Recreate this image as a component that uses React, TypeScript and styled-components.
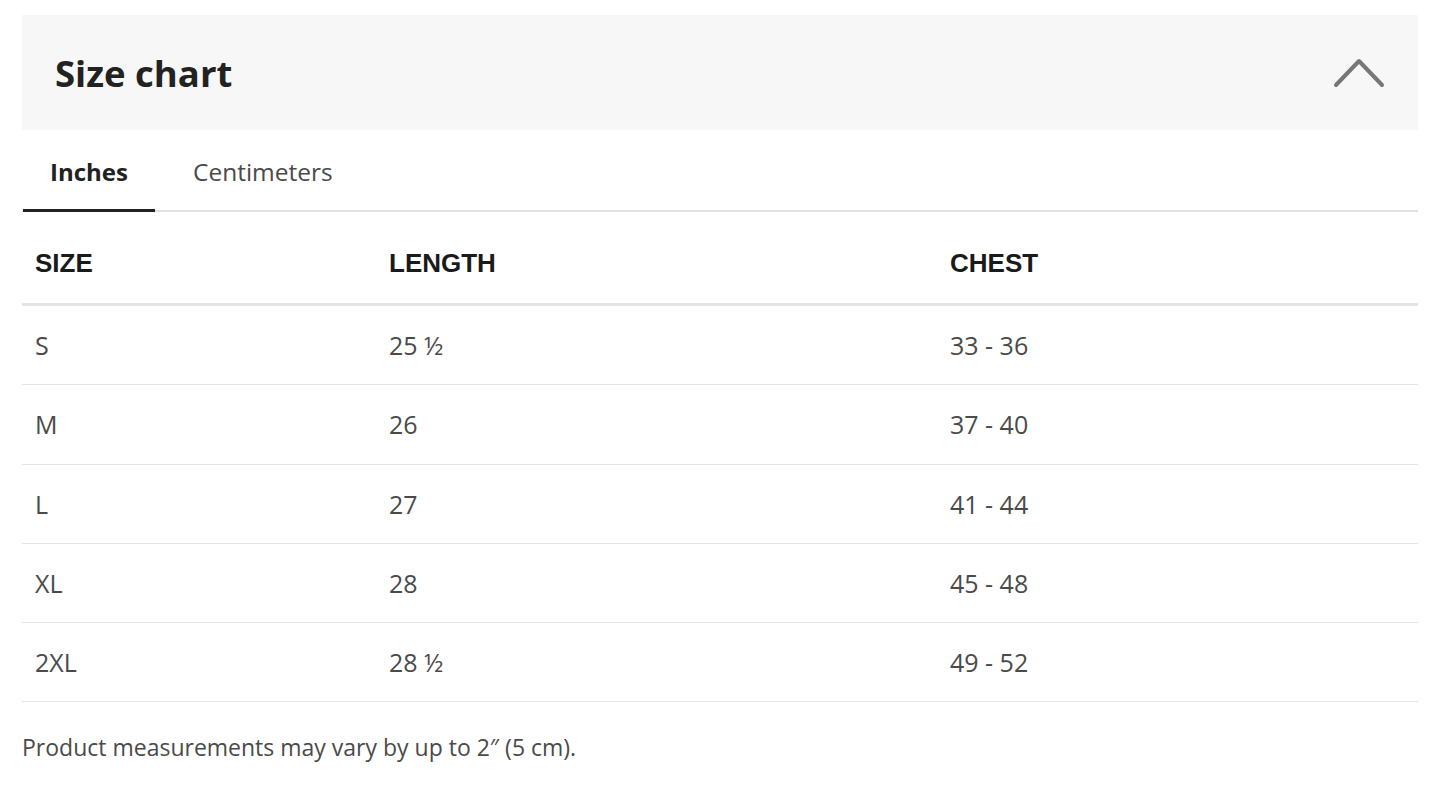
import React from "react";
import styled, { createGlobalStyle } from "styled-components";

const Global = createGlobalStyle`
  html, body { margin: 0; padding: 0; background: #fff; }
  body { font-family: "Open Sans", Lato, sans-serif; }
  *, *::before, *::after { box-sizing: border-box; }
`;

const Page = styled.div`
  padding: 15px 27px 0 22px;
`;

const Header = styled.div`
  height: 115px;
  background: #f7f7f7;
  display: flex;
  align-items: center;
  justify-content: space-between;
  padding: 0 32px 0 33px;
`;

const Title = styled.h2`
  margin: 0;
  font-family: "Open Sans", sans-serif;
  font-weight: 700;
  font-size: 36.5px;
  color: #222;
`;

const Tabs = styled.div`
  display: flex;
  gap: 11px;
  height: 82px;
  border-bottom: 2px solid #e2e2e2;
  padding-left: 1px;
`;

const Tab = styled.div<{ $active?: boolean }>`
  display: flex;
  align-items: center;
  padding: 0 27px;
  font-size: ${(p) => (p.$active ? "24px" : "24.5px")};
  font-weight: ${(p) => (p.$active ? 700 : 400)};
  color: ${(p) => (p.$active ? "#222" : "#4a4a4a")};
  box-shadow: ${(p) => (p.$active ? "inset 0 -3px 0 #222" : "none")};
  margin-bottom: -2px;
`;

const Table = styled.div`
  display: grid;
  grid-template-columns: 354px 561px 1fr;
`;

const HeadCell = styled.div`
  height: 94px;
  display: flex;
  align-items: center;
  padding: 12px 0 0 13px;
  font-family: "Liberation Sans", Arial, sans-serif;
  font-weight: 700;
  font-size: 26px;
  color: #1a1a1a;
  border-bottom: 3px solid #e4e4e4;
`;

const Cell = styled.div`
  height: 79.25px;
  display: flex;
  align-items: center;
  padding-left: 13px;
  font-size: 25px;
  color: #4a4a4a;
  border-bottom: 1px solid #e4e4e4;
`;

const Note = styled.p`
  margin: 29px 0 0;
  font-size: 23px;
  color: #4a4a4a;
`;

const rows = [
  ["S", "25 ½", "33 - 36"],
  ["M", "26", "37 - 40"],
  ["L", "27", "41 - 44"],
  ["XL", "28", "45 - 48"],
  ["2XL", "28 ½", "49 - 52"],
];

export default function App() {
  return (
    <Page>
      <Global />
      <Header>
        <Title>Size chart</Title>
        <svg width="54" height="34" viewBox="0 0 54 34" fill="none">
          <path d="M4 29 L27 5 L50 29" stroke="#777" strokeWidth="4" strokeLinecap="round" strokeLinejoin="round" />
        </svg>
      </Header>
      <Tabs>
        <Tab $active>Inches</Tab>
        <Tab>Centimeters</Tab>
      </Tabs>
      <Table>
        <HeadCell>SIZE</HeadCell>
        <HeadCell>LENGTH</HeadCell>
        <HeadCell>CHEST</HeadCell>
        {rows.map((r) => r.map((c, i) => <Cell key={r[0] + i}>{c}</Cell>))}
      </Table>
      <Note>Product measurements may vary by up to 2″ (5 cm).</Note>
    </Page>
  );
}
